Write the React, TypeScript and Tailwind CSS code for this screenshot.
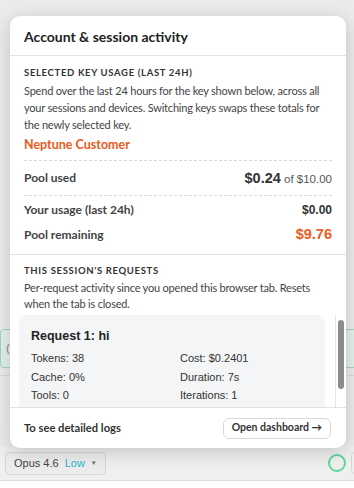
import React from 'react';

const Row: React.FC<{ label: string; children: React.ReactNode; className?: string }> = ({ label, children, className }) => (
  <div className={`flex items-center justify-between ${className ?? ''}`}>
    <span className="text-[12px] font-bold text-[#444]">{label}</span>
    {children}
  </div>
);

const App: React.FC = () => {
  return (
    <div className="relative w-[354px] h-[488px] overflow-hidden bg-[#ebebeb] font-['Liberation_Sans',Arial,sans-serif]">
      {/* page behind the popover */}
      <div className="flex flex-col h-full">
        <div className="h-[329px]" />
        <div className="h-[39px] w-[380px] rounded-l-[4px] border border-[#9fd6bd] bg-[#e4f0ea] pl-[5px] flex items-center text-[11px] text-[#888]">(</div>
        <div className="h-[7px]" />
        <div className="border-t border-[#d9d9d9] flex-1 flex flex-col">
          <div className="h-[70px]" />
          <div className="flex items-center justify-between px-[5px] h-[34px] bg-[#efefef]">
            <div className="flex items-center gap-[6px] h-[23px] px-[8px] rounded-[4px] border border-[#d6d6d6] bg-[#ececec] text-[11px] text-[#444]">
              <span>Opus 4.6</span>
              <span className="text-[#1eb4d6]">Low</span>
              <span className="text-[6px] text-[#666]">▼</span>
            </div>
            <div className="flex items-center gap-[5px] -mr-[22px]">
              <div className="w-[18px] h-[18px] rounded-full border-2 border-[#5fd79b]" />
              <div className="w-[20px] h-[22px] rounded-[4px] border border-[#d6d6d6]" />
            </div>
          </div>
          <div className="flex-1 border-t border-[#dcdcdc] bg-white" />
        </div>
      </div>

      {/* popover */}
      <div className="absolute left-[10px] top-[16px] w-[336px] h-[432px] rounded-[10px] bg-white shadow-[0_4px_18px_rgba(0,0,0,0.18)] flex flex-col overflow-hidden font-['Lato','Noto_Sans',sans-serif]">
        <div className="h-[40px] shrink-0 px-[14px] flex items-center border-b border-[#e3e3e3]">
          <h2 className="text-[14px] font-bold text-[#222] pt-[1px]">Account &amp; session activity</h2>
        </div>

        <div className="px-[14px] pt-[11px] pb-[10px] border-b border-[#e3e3e3] shrink-0">
          <div className="text-[9.5px] leading-[12px] font-bold tracking-[0.07em] text-[#333]">SELECTED KEY USAGE (LAST 24H)</div>
          <p className="mt-[3px] text-[11px] leading-[17px] tracking-[-0.2px] text-[#444]">
            Spend over the last 24 hours for the key shown below, across all your sessions and devices. Switching keys swaps these totals for the newly selected key.
          </p>
          <div className="mt-[3px] pb-[6px] leading-[18px] text-[12.5px] font-bold text-[#ea5a20] border-b border-dashed border-[#d9d9d9]">Neptune Customer</div>
          <Row label="Pool used" className="h-[35px] border-b border-dashed border-[#d9d9d9]">
            <span className="text-[#333] font-['Liberation_Sans',Arial,sans-serif]">
              <span className="text-[14.5px] font-bold">$0.24</span>
              <span className="text-[11.5px] text-[#555]"> of $10.00</span>
            </span>
          </Row>
          <Row label="Your usage (last 24h)" className="pt-[5px] h-[23px]">
            <span className="text-[12px] font-bold text-[#333] font-['Liberation_Sans',Arial,sans-serif]">$0.00</span>
          </Row>
          <Row label="Pool remaining" className="mt-[7px] h-[18px]">
            <span className="text-[14.5px] font-bold text-[#f05a22] font-['Liberation_Sans',Arial,sans-serif]">$9.76</span>
          </Row>
        </div>

        <div className="px-[14px] pt-[10px] shrink-0">
          <div className="text-[9.5px] leading-[12px] font-bold tracking-[0.07em] text-[#333]">THIS SESSION'S REQUESTS</div>
          <p className="mt-[3px] text-[11px] leading-[16px] tracking-[-0.2px] text-[#444]">
            Per-request activity since you opened this browser tab. Resets when the tab is closed.
          </p>
        </div>

        <div className="relative flex-1 min-h-0 mt-[3px] overflow-hidden">
          <div className="pl-[9px] pr-[21px]">
            <div className="rounded-[8px] bg-[#f4f5f7] px-[12px] pt-[12px] pb-[12px] font-['Liberation_Sans',Arial,sans-serif]">
              <div className="text-[12.5px] leading-[18px] font-bold text-[#222]">Request 1: hi</div>
              <div className="mt-[4px] grid grid-cols-2 gap-x-[16px] text-[11px] leading-[18.5px] text-[#333]">
                <span>Tokens: 38</span>
                <span>Cost: $0.2401</span>
                <span>Cache: 0%</span>
                <span>Duration: 7s</span>
                <span>Tools: 0</span>
                <span>Iterations: 1</span>
              </div>
            </div>
          </div>
          {/* scrollbar */}
          <div className="absolute right-0 top-0 bottom-0 w-[11px] border-l border-[#e6e6e6] bg-white">
            <div className="mx-auto mt-[5px] w-[6px] h-[69px] rounded-full bg-[#8c8c8c]" />
          </div>
        </div>

        <div className="h-[41px] shrink-0 border-t border-[#e3e3e3] px-[14px] flex items-center justify-between">
          <span className="text-[11.2px] font-bold text-[#333]">To see detailed logs</span>
          <button className="h-[21px] px-[8px] mr-[1px] rounded-[6px] border border-[#d9d9d9] bg-white text-[10.5px] font-bold text-[#333]">
            Open dashboard →
          </button>
        </div>
      </div>
    </div>
  );
};

export default App;
